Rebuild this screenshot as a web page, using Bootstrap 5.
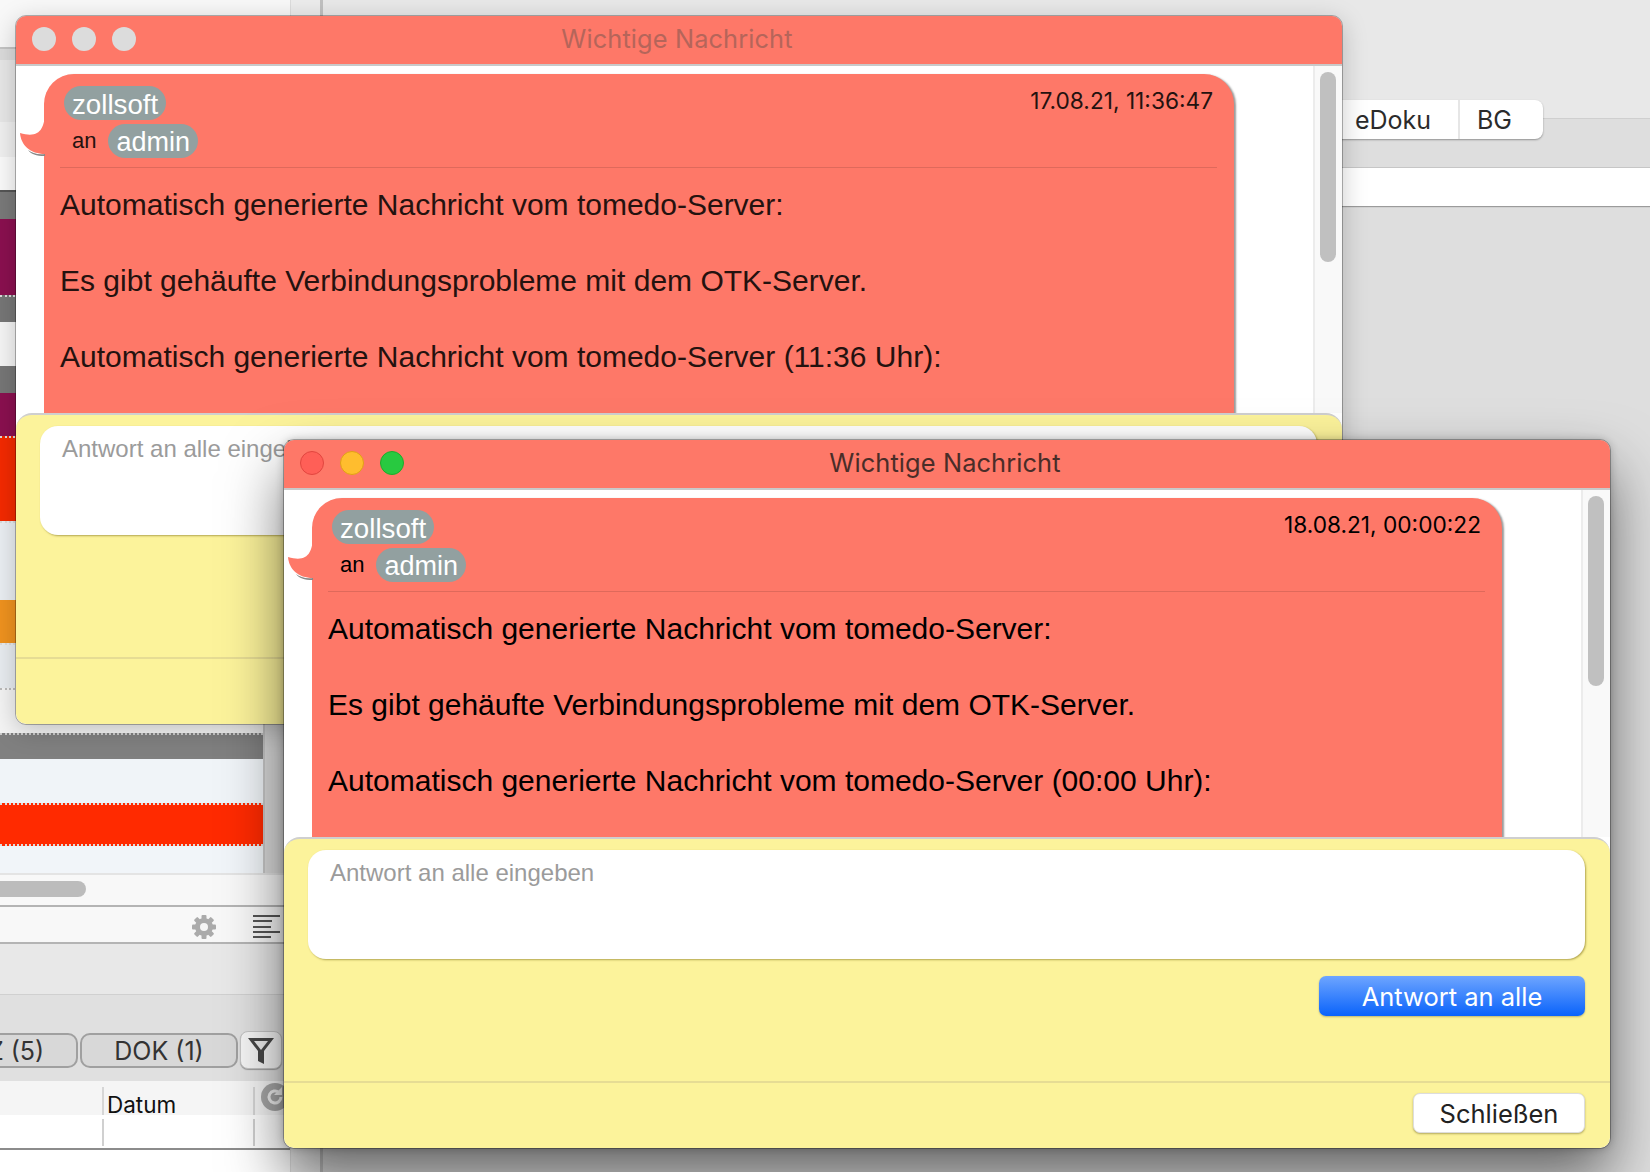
<!DOCTYPE html>
<html lang="de">
<head>
<meta charset="utf-8">
<title>Wichtige Nachricht</title>
<link href="https://cdn.jsdelivr.net/npm/bootstrap@5.3.0/dist/css/bootstrap.min.css" rel="stylesheet">
<style>
html,body{margin:0;width:1650px;height:1172px;overflow:hidden;background:#dedede}
body{font-family:"Liberation Sans",Arial,sans-serif}
.desk{position:relative;width:1650px;height:1172px;overflow:hidden;background:#dedede}
.ui-font{font-family:Inter,"Liberation Sans",sans-serif}
/* background application */
.pane-left{width:290px;height:1172px;flex:none;background:#fff;overflow:hidden}
.pane-mid{width:33px;flex:none;background:#ececec;border-left:1px solid #dcdcdc;border-right:3px solid #c0c0c0;height:1172px}
.pane-right{flex:1 1 auto;min-width:0}
.tb{height:119px;background:#e8e8e8;border-bottom:1px solid #cfcfcf}
.seg{margin-top:-19px;margin-right:107px;height:39px;width:240px;background:#fff;border-radius:0 8px 8px 0;box-shadow:0 1px 2px rgba(0,0,0,.35);font-size:25px;color:#2b2b2b}
.seg .seg-a{width:157px;padding-left:52px;border-right:2px solid #e6e6e6;line-height:41px}
.seg .seg-b{flex:1;padding-left:17px;line-height:41px}
.band{margin-top:28px;height:39px;background:#fff;border-top:1px solid #c6c6c6;box-shadow:0 1px 1px rgba(0,0,0,.3)}
.rows-wrap{height:813px;overflow:hidden}
.rows{width:263px;flex:none}
.gutter{flex:1;background:#dcdcdc;border-left:2px solid #c8c8c8}
.r0{height:47px;background:#f8f8f8;flex:none}
.r1{height:13px;background:#dcdcdc;border-top:2px solid #c4c4c4;flex:none}
.r2{height:62px;background:#e8e8e8}
.r3{height:35px;background:#f1f1f1}
.r4{height:33px;background:#fbfbfb}
.r5{height:29px;background:#7a7a7a;border-top:2px solid #555}
.r6{height:76px;background:#8b1050}
.r7{height:27px;background:#777;border-top:2px dotted #ddd}
.r8{height:44px;background:#f6f6f6}
.r9{height:27px;background:#777}
.r10{height:43px;background:#8b1050}
.r11{height:85px;background:#f52a00;border-top:2px dotted #ddd}
.r12{height:79px;background:#ebeff3;border-top:2px dotted #ddd}
.r13{height:43px;background:#f0931f}
.r14{height:45px;background:#e9edf1;border-top:2px dotted #ddd}
.r15{height:45px;background:#f4f4f4;border-top:2px dotted #bbb}
.r16{height:26px;background:#808080;border-top:2px dotted #ccc}
.r17{height:44px;background:#f0f4f8}
.r18{height:43px;background:#ff2a00;border-top:2px dotted #ddd;border-bottom:2px dotted #ddd}
.r19{height:27px;background:#f1f5f9}
.hscroll{height:32px;background:#f8f8f8;border-top:2px solid #e4e4e4;padding-top:6px}
.hthumb{width:86px;height:16px;background:#bcbcbc;border-radius:0 8px 8px 0}
.tools{height:39px;background:#f8f8f8;border-top:2px solid #b4b4b4;border-bottom:2px solid #b4b4b4;padding:4px 10px 0 0;gap:36px}
.tools-blank{height:51px;background:#e8e8e8;border-bottom:1px solid #d0d0d0}
.filters{height:86px;background:#e0e0e0;padding:38px 9px 0 0;gap:2px;overflow:hidden}
.filter-btn{height:35px;border:2px solid #a0a0a0;border-radius:10px;background:#d8d8d8;color:#333;font-size:25px;line-height:32px;padding:0;white-space:nowrap;text-align:center;flex:none}
.f-z{width:124px;margin-left:-46px}
.f-d{width:158px}
.f-f{width:42px;height:38px;margin-top:-2px;border:1px solid #c4c4c4;border-radius:8px;background:#f6f6f6;box-shadow:0 1px 1px rgba(0,0,0,.3);padding:0;flex:none}
.thead-row{height:34px;background:#f5f5f5;font-size:22.5px;color:#111}
.col-one{width:102px;flex:none}
.col-two{width:153px;flex:none;padding-left:3px;border-left:2px solid #d6d6d6;border-right:2px solid #d6d6d6;margin-top:6px;line-height:36px}
.tbody-row{height:35px;background:#fff;border-bottom:2px solid #8c8c8c}
.tbody-row .col-two{margin-top:4px;height:27px;border-color:#d0d0d0}
.refresh{margin:2px 0 0 6px}
/* windows on the desktop */
.win{position:absolute;width:1326px;height:708px;background:#fff;border-radius:10px;overflow:hidden;display:flex;flex-direction:column;outline:1px solid rgba(0,0,0,.28)}
.win-back{left:16px;top:16px;box-shadow:0 6px 26px rgba(0,0,0,.22);color:#24120f}
.win-front{left:284px;top:440px;box-shadow:0 30px 60px rgba(0,0,0,.55),0 0 8px rgba(0,0,0,.25);color:#000}
.titlebar{height:50px;flex:none;background:#fe7868;border-bottom:2px solid #c9c9c9;display:grid;grid-template-columns:1fr auto 1fr;align-items:center;padding:0 20px 2px 16px}
.lights{gap:16px}
.light{width:24px;height:24px;border-radius:50%;background:#dcdcdc}
.l-r{background:#ff5f57;border:1px solid #e2463f}
.l-y{background:#ffbd2e;border:1px solid #e1a116}
.l-g{background:#28c940;border:1px solid #1dad2b}
.wintitle{font-size:25.4px;font-family:Inter,"Liberation Sans",sans-serif;letter-spacing:.1px}
.win-back .wintitle{color:#b5655a}
.win-front .wintitle{color:#4a2d28}
.scrollarea{height:347px;flex:none;overflow:hidden}
.msgcol{flex:1 1 auto;min-width:0;padding:8px 79px 0 28px}
.vbar{width:29px;flex:none;background:#f9f9f9;border-left:2px solid #ececec;padding:6px 6px 0 5px}
.vthumb{height:190px;background:#c0c0c0;border-radius:8px}
.bubble{position:relative;background:#fe7868;border-radius:30px 30px 0 0;padding:12px 17px 0 16px;height:500px;box-shadow:2px 1px 2px rgba(0,0,0,.4)}
.tail{position:absolute;left:-24px;top:38px}
.who{display:inline-block;background:#92a0a0;color:#fff;border-radius:17px;height:34px;line-height:37px;padding:0 8px;font-size:27.7px;font-weight:400;vertical-align:top}
.who-first{margin-left:4px}
.who-second{font-size:27px}
.an{font-size:22px;margin:0 12px 0 12px;line-height:34px;display:inline-block}
.second{margin-top:4px}
.stamp{font-size:22.7px;line-height:30px;padding-right:4px;margin-top:0;font-family:Inter,"Liberation Sans",sans-serif}
.bubble-rule{margin:9px 0 0 0;border:0;border-top:1px solid rgba(0,0,0,.12);opacity:1}
.msgtext{font-size:30px;line-height:38px;margin:0 0 38px 0}
.msgtext-first{margin-top:18px}
.composer{flex:1 1 auto;background:#fcf39b;border-radius:16px 16px 10px 10px;border-top:2px solid #cfcfcf;padding-top:11px;position:relative}
.entry{margin:0 25px 0 24px;height:109px;background:#fff;border-radius:18px;box-shadow:1px 1px 2px rgba(130,115,30,.6);padding:8px 22px;font-size:24px;line-height:30px;color:#9b9b9b}
.reply-row{margin:17px 25px 0 0;height:40px}
.reply-btn{width:266px;height:40px;padding:0;border:0;border-radius:7px;color:#fff;font-size:25.5px;line-height:42px;background:linear-gradient(#6ea5ff,#0a63fb);box-shadow:0 1px 2px rgba(0,0,0,.25)}
.foot{margin-top:65px;border-top:2px solid #e6dc94;padding:10px 25px 0 0}
.foot-back{margin-top:122px}
.close-btn{width:172px;height:40px;padding:0;border:1px solid #ddd;border-radius:7px;background:#fff;color:#222;font-size:25.5px;line-height:40px;box-shadow:0 1px 2px rgba(90,80,20,.45)}
</style>
</head>
<body>
<div class="desk d-flex">
  <div class="pane-left d-flex flex-column">
    <div class="r0"></div><div class="r1"></div>
    <div class="rows-wrap d-flex">
      <div class="rows">
        <div class="r2"></div><div class="r3"></div><div class="r4"></div>
        <div class="r5"></div><div class="r6"></div><div class="r7"></div><div class="r8"></div><div class="r9"></div>
        <div class="r10"></div><div class="r11"></div><div class="r12"></div><div class="r13"></div><div class="r14"></div>
        <div class="r15"></div><div class="r16"></div><div class="r17"></div><div class="r18"></div><div class="r19"></div>
      </div>
      <div class="gutter"></div>
    </div>
    <div class="hscroll"><div class="hthumb"></div></div>
    <div class="tools d-flex align-items-center justify-content-end">
      <svg width="26" height="26" viewBox="0 0 26 26"><g fill="#ababab"><circle cx="13" cy="13" r="9"/><rect x="10.5" y="1" width="5" height="24" rx="1"/><rect x="10.5" y="1" width="5" height="24" rx="1" transform="rotate(45 13 13)"/><rect x="10.5" y="1" width="5" height="24" rx="1" transform="rotate(90 13 13)"/><rect x="10.5" y="1" width="5" height="24" rx="1" transform="rotate(135 13 13)"/></g><circle cx="13" cy="13" r="4" fill="#f6f6f6"/></svg>
      <svg width="27" height="24" viewBox="0 0 27 24"><g fill="#555"><rect y="0" width="27" height="2"/><rect y="5" width="19" height="2"/><rect y="11" width="18" height="2"/><rect y="16" width="27" height="2"/><rect y="21" width="18" height="2"/></g></svg>
    </div>
    <div class="tools-blank"></div>
    <div class="filters d-flex ui-font">
      <button type="button" class="filter-btn f-z btn">Z (5)</button>
      <button type="button" class="filter-btn f-d btn">DOK (1)</button>
      <button type="button" class="f-f btn" aria-label="Filter"><svg width="30" height="30" viewBox="0 0 30 30"><path d="M2 3H28L18 16V29L12 26V16Z" fill="#474747"/><path d="M8 6H22L15 15Z" fill="#ececec"/></svg></button>
    </div>
    <div class="thead-row d-flex ui-font">
      <div class="col-one"></div>
      <div class="col-two">Datum</div>
      <svg class="refresh" width="28" height="28" viewBox="0 0 28 28"><circle cx="14" cy="14" r="14" fill="#a8a8a8"/><path d="M20 14a6 6 0 1 1-2-4.5" fill="none" stroke="#f0f0f0" stroke-width="3"/><path d="M21 4v8h-8z" fill="#f0f0f0"/></svg>
    </div>
    <div class="tbody-row d-flex"><div class="col-one"></div><div class="col-two"></div></div>
  </div>
  <div class="pane-mid"></div>
  <div class="pane-right">
    <div class="tb"></div>
    <div class="seg d-flex ms-auto ui-font"><div class="seg-a">eDoku</div><div class="seg-b">BG</div></div>
    <div class="band"></div>
  </div>

  <div class="win win-back">
    <div class="titlebar">
      <div class="lights d-flex"><span class="light"></span><span class="light"></span><span class="light"></span></div>
      <div class="wintitle">Wichtige Nachricht</div>
      <div></div>
    </div>
    <div class="scrollarea d-flex">
      <div class="msgcol">
        <div class="bubble">
          <svg class="tail" width="26" height="44" viewBox="0 0 26 44"><path d="M25 2C24 16 20 27 0 21C1 33 10 42 25 42Z" fill="#fe7868"/><path d="M8 38C12 41 18 43 25 42V44C16 44 11 42 8 38Z" fill="#888"/></svg>
          <div class="d-flex justify-content-between">
            <div>
              <span class="badge who who-first">zollsoft</span>
              <div class="second"><span class="an">an</span><span class="badge who who-second">admin</span></div>
            </div>
            <div class="stamp">17.08.21, 11:36:47</div>
          </div>
          <hr class="bubble-rule">
          <p class="msgtext msgtext-first">Automatisch generierte Nachricht vom tomedo-Server:</p>
          <p class="msgtext">Es gibt gehäufte Verbindungsprobleme mit dem OTK-Server.</p>
          <p class="msgtext">Automatisch generierte Nachricht vom tomedo-Server (11:36 Uhr):</p>
        </div>
      </div>
      <div class="vbar"><div class="vthumb"></div></div>
    </div>
    <div class="composer">
      <div class="entry">Antwort an alle eingeben</div>
      <div class="foot foot-back"></div>
    </div>
  </div>

  <div class="win win-front">
    <div class="titlebar">
      <div class="lights d-flex"><span class="light l-r"></span><span class="light l-y"></span><span class="light l-g"></span></div>
      <div class="wintitle">Wichtige Nachricht</div>
      <div></div>
    </div>
    <div class="scrollarea d-flex">
      <div class="msgcol">
        <div class="bubble">
          <svg class="tail" width="26" height="44" viewBox="0 0 26 44"><path d="M25 2C24 16 20 27 0 21C1 33 10 42 25 42Z" fill="#fe7868"/><path d="M8 38C12 41 18 43 25 42V44C16 44 11 42 8 38Z" fill="#888"/></svg>
          <div class="d-flex justify-content-between">
            <div>
              <span class="badge who who-first">zollsoft</span>
              <div class="second"><span class="an">an</span><span class="badge who who-second">admin</span></div>
            </div>
            <div class="stamp">18.08.21, 00:00:22</div>
          </div>
          <hr class="bubble-rule">
          <p class="msgtext msgtext-first">Automatisch generierte Nachricht vom tomedo-Server:</p>
          <p class="msgtext">Es gibt gehäufte Verbindungsprobleme mit dem OTK-Server.</p>
          <p class="msgtext">Automatisch generierte Nachricht vom tomedo-Server (00:00 Uhr):</p>
        </div>
      </div>
      <div class="vbar"><div class="vthumb"></div></div>
    </div>
    <div class="composer">
      <div class="entry">Antwort an alle eingeben</div>
      <div class="reply-row d-flex justify-content-end"><button type="button" class="btn btn-primary reply-btn ui-font">Antwort an alle</button></div>
      <div class="foot d-flex justify-content-end"><button type="button" class="btn btn-light close-btn ui-font">Schließen</button></div>
    </div>
  </div>
</div>
<script src="https://cdn.jsdelivr.net/npm/bootstrap@5.3.0/dist/js/bootstrap.bundle.min.js"></script>
</body>
</html>
